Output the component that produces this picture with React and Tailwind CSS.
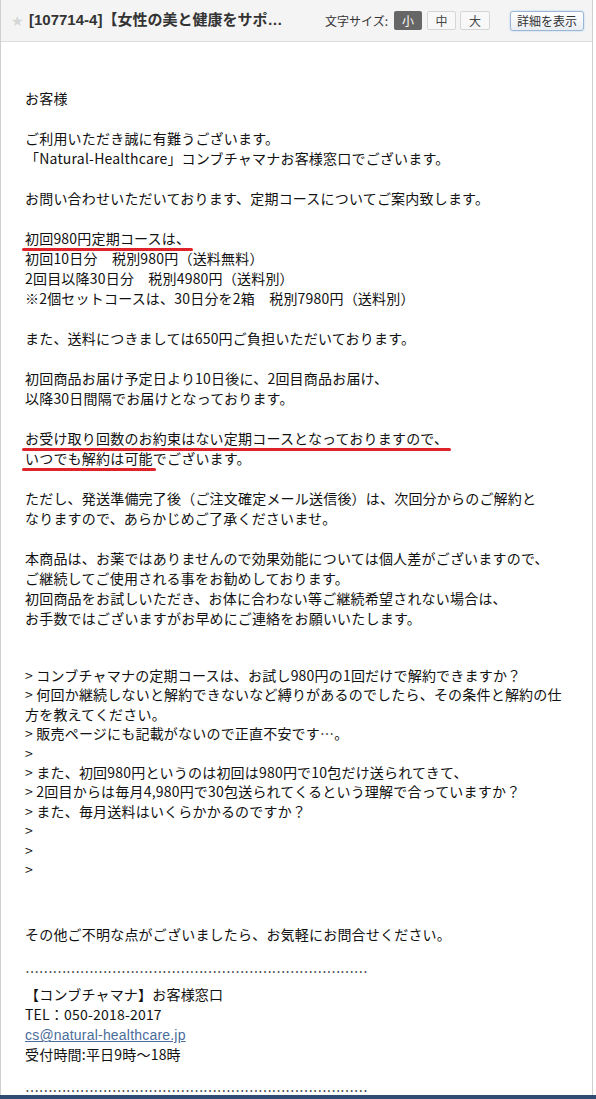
const body = '"Noto Sans CJK JP", "MS Gothic", sans-serif';

function Mark({ children }) {
  return (
    <span className="relative">
      {children}
      <span className="absolute left-[-3px] right-[-3px] bottom-[-3px] h-[3px] rounded-full bg-[#e0232b]" />
    </span>
  );
}

function Line({ children }) {
  return <div className="h-5 leading-5 whitespace-nowrap">{children}</div>;
}

function Blank() {
  return <div className="h-5" />;
}

function QLine({ children }) {
  return <div className="h-[19.4px] leading-[19.4px] whitespace-nowrap">{children}</div>;
}

export default function App() {
  const dots = '…'.repeat(25);
  return (
    <div className="w-[596px] h-[1099px] overflow-hidden bg-white flex flex-col">
      <div className="flex-1 flex flex-col mr-[3px] border-l border-r border-[#cfcfcf] min-h-0">
        <header className="h-[42px] shrink-0 bg-[#f4f4f4] border-b border-[#dcdcdc] flex items-center pl-[10px] pr-[8px]">
          <span className="text-[#d6d6d6] text-[14px] leading-none mr-[5px]">★</span>
          <span
            className="text-[15px] font-bold text-[#333] whitespace-nowrap"
            style={{ fontFamily: '"Liberation Sans", "Noto Sans CJK JP", sans-serif' }}
          >
            [107714-4]【女性の美と健康をサポ…
          </span>
          <div className="ml-auto flex items-center text-[12px] text-[#333]" style={{ fontFamily: '"Noto Sans CJK JP", sans-serif' }}>
            <span className="mr-[6px]">文字サイズ:</span>
            <span className="w-[28px] h-[19px] flex items-center justify-center rounded-[2px] bg-[#666] text-white">小</span>
            <span className="ml-[5px] w-[29px] h-[19px] flex items-center justify-center rounded-[2px] bg-[#f8f8f8] border border-[#d6d6d6] text-[#444]">中</span>
            <span className="ml-[4px] w-[30px] h-[19px] flex items-center justify-center rounded-[2px] bg-[#f8f8f8] border border-[#d6d6d6] text-[#444]">大</span>
            <span className="ml-[20px] w-[74px] h-[20px] flex items-center justify-center rounded-[3px] bg-gradient-to-b from-white to-[#e9eef4] border border-[#9bb7d6] shadow-[0_0_2px_#a9cbeb] text-[#333]">
              詳細を表示
            </span>
          </div>
        </header>

        <div className="pl-[24px] pt-[46px] text-[14px] text-[#111] tracking-[0.2px]" style={{ fontFamily: body }}>
          <Line>お客様</Line>
          <Blank />
          <Line>ご利用いただき誠に有難うございます。</Line>
          <Line>「Natural-Healthcare」コンブチャマナお客様窓口でございます。</Line>
          <Blank />
          <Line>お問い合わせいただいております、定期コースについてご案内致します。</Line>
          <Blank />
          <Line><Mark>初回980円定期コースは、</Mark></Line>
          <Line>初回10日分　税別980円（送料無料）</Line>
          <Line>2回目以降30日分　税別4980円（送料別）</Line>
          <Line>※2個セットコースは、30日分を2箱　税別7980円（送料別）</Line>
          <Blank />
          <Line>また、送料につきましては650円ご負担いただいております。</Line>
          <Blank />
          <Line>初回商品お届け予定日より10日後に、2回目商品お届け、</Line>
          <Line>以降30日間隔でお届けとなっております。</Line>
          <Blank />
          <Line><Mark>お受け取り回数のお約束はない定期コースとなっておりますので、</Mark></Line>
          <Line><Mark>いつでも解約は可能</Mark>でございます。</Line>
          <Blank />
          <Line>ただし、発送準備完了後（ご注文確定メール送信後）は、次回分からのご解約と</Line>
          <Line>なりますので、あらかじめご了承くださいませ。</Line>
          <Blank />
          <Line>本商品は、お薬ではありませんので効果効能については個人差がございますので、</Line>
          <Line>ご継続してご使用される事をお勧めしております。</Line>
          <Line>初回商品をお試しいただき、お体に合わない等ご継続希望されない場合は、</Line>
          <Line>お手数ではございますがお早めにご連絡をお願いいたします。</Line>
          <div className="h-[38px]" />
          <QLine>&gt; コンブチャマナの定期コースは、お試し980円の1回だけで解約できますか？</QLine>
          <QLine>&gt; 何回か継続しないと解約できないなど縛りがあるのでしたら、その条件と解約の仕</QLine>
          <QLine>方を教えてください。</QLine>
          <QLine>&gt; 販売ページにも記載がないので正直不安です…。</QLine>
          <QLine>&gt;</QLine>
          <QLine>&gt; また、初回980円というのは初回は980円で10包だけ送られてきて、</QLine>
          <QLine>&gt; 2回目からは毎月4,980円で30包送られてくるという理解で合っていますか？</QLine>
          <QLine>&gt; また、毎月送料はいくらかかるのですか？</QLine>
          <QLine>&gt;</QLine>
          <QLine>&gt;</QLine>
          <QLine>&gt;</QLine>
          <div className="h-[45px]" />
          <Line>その他ご不明な点がございましたら、お気軽にお問合せください。</Line>
          <div className="h-[17px]" />
          <Line><span className="tracking-[-0.3px]">{dots}</span></Line>
          <div className="h-[3px]" />
          <Line>【コンブチャマナ】お客様窓口</Line>
          <Line>TEL：050-2018-2017</Line>
          <Line>
            <span className="text-[#4a6c9b] underline" style={{ fontFamily: '"Liberation Sans", Arial, sans-serif' }}>
              cs@natural-healthcare.jp
            </span>
          </Line>
          <Line>受付時間:平日9時～18時</Line>
          <div className="h-[22px]" />
          <div className="h-[8px] leading-[8px] whitespace-nowrap">
            <span className="tracking-[-0.3px]">{dots}</span>
          </div>
        </div>
      </div>
      <div className="h-[4px] shrink-0 bg-[#2f4c74]" />
    </div>
  );
}
